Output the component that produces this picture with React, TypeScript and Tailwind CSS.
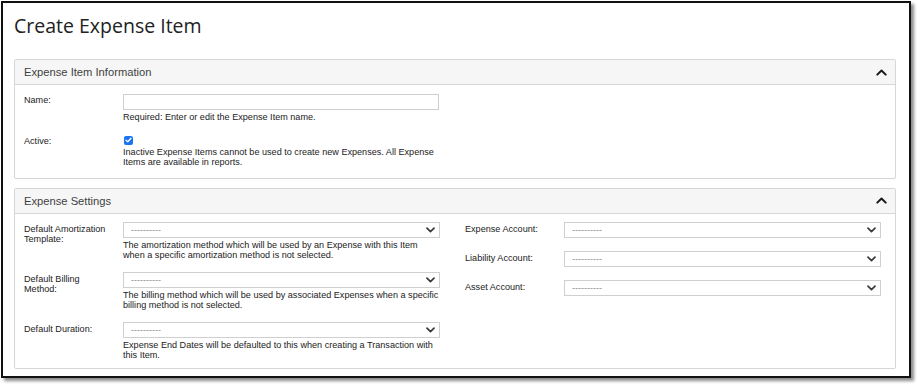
import React from "react";

function ChevronDown() {
  return (
    <svg width="9" height="6" viewBox="0 0 9 6" className="block">
      <path d="M1 1.2 L4.5 4.6 L8 1.2" fill="none" stroke="#3a3a3a" strokeWidth="1.7" strokeLinecap="round" strokeLinejoin="round" />
    </svg>
  );
}

function ChevronUp() {
  return (
    <svg width="11" height="7" viewBox="0 0 11 7" className="block">
      <path d="M1.3 5.6 L5.5 1.5 L9.7 5.6" fill="none" stroke="#1a1a1a" strokeWidth="2" strokeLinecap="round" strokeLinejoin="round" />
    </svg>
  );
}

function Select() {
  return (
    <div className="h-[16px] border border-[#cfcfcf] bg-white flex items-center justify-between pl-[7px] pr-[4px]">
      <span className="text-[9px] leading-[10px] text-[#8a8a8a]">----------</span>
      <ChevronDown />
    </div>
  );
}

function Panel({ title, children, bodyClass }: { title: string; children: React.ReactNode; bodyClass: string }) {
  return (
    <div className="border border-[#d6d6d6] rounded-[2px] bg-white">
      <div className="h-[25px] bg-[#f6f6f6] border-b border-[#d6d6d6] flex items-center justify-between pl-[9px] pr-[8px]">
        <span className="text-[11.2px] leading-[14px] text-[#3f3f3f]">{title}</span>
        <ChevronUp />
      </div>
      <div className={bodyClass}>{children}</div>
    </div>
  );
}

function Help({ children }: { children: React.ReactNode }) {
  return <div className="mt-[2px] text-[9.1px] leading-[10.5px] text-[#222] whitespace-nowrap">{children}</div>;
}

function Label({ children, top = "pt-[2px]" }: { children: React.ReactNode; top?: string }) {
  return <div className={`text-[9.1px] leading-[10px] text-[#222] pr-[4px] whitespace-nowrap ${top}`}>{children}</div>;
}

export default function App() {
  return (
    <div className="w-[917px] h-[384px] bg-white font-['Liberation_Sans',Arial,sans-serif]">
      <div className="ml-[1px] mt-[1px] w-[910px] h-[377px] border-2 border-[#111] shadow-[3px_3px_3px_rgba(0,0,0,0.45)] pl-[11px] pr-[13px] overflow-hidden">
        <div className="h-[56px] pt-[9px]">
          <h1 className="font-['Open_Sans',sans-serif] text-[19.5px] leading-[27px] text-[#222] font-normal">
            Create Expense Item
          </h1>
        </div>

        <Panel title="Expense Item Information" bodyClass="pt-[9px] pb-[10px] pl-[9px] pr-[14px]">
          <div className="grid grid-cols-[99px_316px]">
            <Label top="pt-[1px]">Name:</Label>
            <div>
              <div className="h-[16px] border border-[#cfcfcf] bg-white" />
              <Help>Required: Enter or edit the Expense Item name.</Help>
            </div>
          </div>
          <div className="grid grid-cols-[99px_316px] mt-[12px]">
            <Label top="pt-[1px]">Active:</Label>
            <div>
              <div className="w-[9px] h-[9px] mt-[1px] ml-[1px] rounded-[2px] bg-[#1a73f0] flex items-center justify-center">
                <svg width="7" height="6" viewBox="0 0 7 6" className="block">
                  <path d="M1 3.2 L2.8 4.8 L6 1.2" fill="none" stroke="#fff" strokeWidth="1.3" strokeLinecap="round" strokeLinejoin="round" />
                </svg>
              </div>
              <Help>
                Inactive Expense Items cannot be used to create new Expenses. All Expense
                <br />
                Items are available in reports.
              </Help>
            </div>
          </div>
        </Panel>

        <div className="mt-[9px]">
          <Panel title="Expense Settings" bodyClass="pt-[8px] pb-[7px] pl-[9px] pr-[14px] grid grid-cols-2 gap-x-[25px]">
            <div className="flex flex-col gap-[11px]">
              <div className="grid grid-cols-[99px_1fr]">
                <Label>
                  Default Amortization
                  <br />
                  Template:
                </Label>
                <div>
                  <Select />
                  <Help>
                    The amortization method which will be used by an Expense with this Item
                    <br />
                    when a specific amortization method is not selected.
                  </Help>
                </div>
              </div>
              <div className="grid grid-cols-[99px_1fr]">
                <Label>
                  Default Billing
                  <br />
                  Method:
                </Label>
                <div>
                  <Select />
                  <Help>
                    The billing method which will be used by associated Expenses when a specific
                    <br />
                    billing method is not selected.
                  </Help>
                </div>
              </div>
              <div className="grid grid-cols-[99px_1fr]">
                <Label>Default Duration:</Label>
                <div>
                  <Select />
                  <Help>
                    Expense End Dates will be defaulted to this when creating a Transaction with
                    <br />
                    this Item.
                  </Help>
                </div>
              </div>
            </div>
            <div className="flex flex-col gap-[13px]">
              <div className="grid grid-cols-[99px_1fr]">
                <Label>Expense Account:</Label>
                <Select />
              </div>
              <div className="grid grid-cols-[99px_1fr]">
                <Label>Liability Account:</Label>
                <Select />
              </div>
              <div className="grid grid-cols-[99px_1fr]">
                <Label>Asset Account:</Label>
                <Select />
              </div>
            </div>
          </Panel>
        </div>
      </div>
    </div>
  );
}
